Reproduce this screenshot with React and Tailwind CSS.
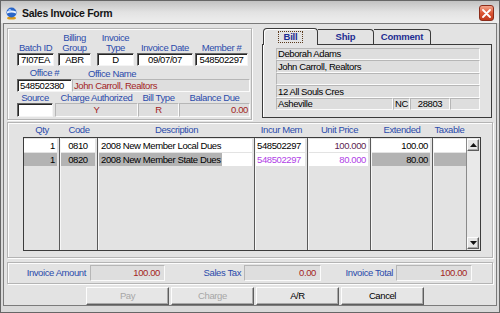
const sunkWhite = 'bg-white border border-t-[#666666] border-l-[#666666] border-r-[#f4f4f4] border-b-[#f4f4f4] shadow-[inset_1px_1px_0_#262626]'
const sunkGray = 'bg-[#dedede] border border-t-[#b6b6b6] border-l-[#b6b6b6] border-r-[#fbfbfb] border-b-[#fbfbfb]'
const etched = 'border border-[#b4b4b4] shadow-[inset_1px_1px_0_#fdfdfd,1px_1px_0_#fdfdfd]'
const raised = 'bg-[#e6e6e6] border border-t-[#fdfdfd] border-l-[#fdfdfd] border-r-[#5e5e5e] border-b-[#5e5e5e] shadow-[inset_-1px_-1px_0_#a8a8a8]'

function HeadField({ label, box, value }) {
  return (
    <div className={`flex flex-col ${box}`}>
      <div className="h-[20px] flex flex-col justify-end items-center leading-[10px] text-[#2b4bab] whitespace-nowrap">
        {label.map(l => <span key={l}>{l}</span>)}
      </div>
      <div className={`h-[13px] flex items-center justify-center ${sunkWhite}`}>{value}</div>
    </div>
  )
}

function Cell({ className = '', children }) {
  return <div className={`h-[13px] mr-[2px] flex items-center px-[2px] whitespace-nowrap ${className}`}>{children}</div>
}

function Globe() {
  return (
    <svg width="11" height="13" viewBox="0 0 11 13">
      <ellipse cx="5.5" cy="11" rx="4.5" ry="1.6" fill="#d89a1c" />
      <circle cx="5.5" cy="5.5" r="5" fill="#2a66c8" />
      <path d="M1 4.5 Q5.5 2.5 10 4.5 L10 6.5 Q5.5 4.5 1 6.5 Z" fill="#e8f0ff" />
      <circle cx="3.8" cy="3.2" r="1.3" fill="#9cc4ff" />
    </svg>
  )
}

function Arrow({ up }) {
  return (
    <svg width="7" height="4" viewBox="0 0 7 4">
      <path d={up ? 'M0 4 L3.5 0 L7 4 Z' : 'M0 0 L3.5 4 L7 0 Z'} fill="#111" />
    </svg>
  )
}

export default function App() {
  return (
    <div className="w-[500px] h-[313px] flex flex-col bg-[#d9d9d9] border border-[#666666] overflow-hidden font-['Liberation_Sans',Arial,sans-serif] text-[9.5px] tracking-[-0.4px] leading-none text-black select-none">
      {/* title bar */}
      <div className="h-[22px] flex items-center pl-[5px] pr-[5px] pt-[2px] bg-linear-to-b from-[#c2c2c2] via-[#e2e2e2] to-[#eeeeee]">
        <Globe />
        <span className="ml-[5px] text-[10.5px] font-bold tracking-[-0.3px] text-[#141414]">Sales Invoice Form</span>
        <div className="ml-auto w-[15px] h-[16px] rounded-[3px] border border-[#8c2c1a] bg-linear-to-b from-[#f3a58c] via-[#dc5634] to-[#c13a1c] flex items-center justify-center">
          <svg width="9" height="9" viewBox="0 0 9 9">
            <path d="M1 1 L8 8 M8 1 L1 8" stroke="#fff" strokeWidth="1.8" strokeLinecap="round" />
          </svg>
        </div>
      </div>

      {/* client */}
      <div className="mx-[2px] h-[283px] flex flex-col border border-[#7b7b7b] bg-[#e3e3e3] px-[3px]">
        {/* header area */}
        <div className="mt-[4px] h-[92px] flex">
          <div className={`w-[245px] flex flex-col pl-[9px] pt-[4px] ${etched}`}>
            <div className="flex items-end">
              <HeadField label={['Batch ID']} box="w-[37px]" value="7I07EA" />
              <HeadField label={['Billing', 'Group']} box="ml-[4px] w-[33px]" value="ABR" />
              <HeadField label={['Invoice', 'Type']} box="ml-[6px] w-[37px]" value="D" />
              <HeadField label={['Invoice Date']} box="ml-[3px] w-[56px]" value="09/07/07" />
              <HeadField label={['Member #']} box="ml-[2px] w-[53px]" value="548502297" />
            </div>
            <div className="mt-[2px] h-[10px] flex text-[#2b4bab] whitespace-nowrap">
              <div className="w-[55px] flex justify-center">Office #</div>
              <div className="pl-[16px] pt-[1px]">Office Name</div>
            </div>
            <div className="mt-[1px] flex">
              <div className={`w-[55px] h-[13px] flex items-center pl-[2px] ${sunkWhite}`}>548502380</div>
              <div className={`w-[178px] h-[13px] flex items-center pl-[1px] text-[#a31f1f] ${sunkGray}`}>John Carroll, Realtors</div>
            </div>
            <div className="mt-[1px] h-[10px] flex text-[#2b4bab] whitespace-nowrap">
              <div className="w-[36px] flex justify-center">Source</div>
              <div className="ml-[2px] w-[83px] flex justify-center">Charge Authorized</div>
              <div className="w-[41px] flex justify-center">Bill Type</div>
              <div className="w-[71px] flex justify-center">Balance Due</div>
            </div>
            <div className="flex h-[14px]">
              <div className={`w-[36px] ${sunkWhite}`} />
              <div className={`ml-[2px] w-[83px] flex items-center justify-center text-[#a31f1f] ${sunkGray}`}>Y</div>
              <div className={`w-[41px] flex items-center justify-center text-[#a31f1f] ${sunkGray}`}>R</div>
              <div className={`w-[71px] flex items-center justify-end pr-[1px] text-[#a31f1f] ${sunkGray}`}>0.00</div>
            </div>
          </div>

          {/* tabs */}
          <div className="ml-[10px] w-[230px] h-[90px] flex flex-col">
            <div className="h-[16px] flex items-end pl-[1px] relative z-10 font-bold text-[#1d2d92] tracking-[-0.2px]">
              <div className="w-[55px] h-[17px] -mb-[1px] border border-b-0 border-[#3a3a3a] rounded-t-[4px] bg-[#e3e3e3] shadow-[inset_1px_1px_0_#fff] flex items-center justify-center">
                <span className="h-[12px] px-[5px] flex items-center border border-dotted border-[#5b3a1c]">Bill</span>
              </div>
              <div className="w-[56px] h-[15px] border border-b-0 border-l-0 border-[#3a3a3a] rounded-tr-[4px] bg-[#e3e3e3] flex items-center justify-center">Ship</div>
              <div className="w-[57px] h-[15px] border border-b-0 border-l-0 border-[#3a3a3a] rounded-tr-[4px] bg-[#e3e3e3] flex items-center justify-center">Comment</div>
            </div>
            <div className="flex-1 border border-[#3a3a3a] shadow-[inset_1px_0_0_#fff] pl-[13px] pr-[11px] pt-[3px]">
              <div className="h-[62px] grid grid-rows-5">
                <div className={`flex items-center pl-[1px] ${sunkGray}`}>Deborah Adams</div>
                <div className={`flex items-center pl-[1px] ${sunkGray}`}>John Carroll, Realtors</div>
                <div className={sunkGray} />
                <div className={`flex items-center pl-[1px] ${sunkGray}`}>12 All Souls Cres</div>
                <div className="flex">
                  <div className={`w-[117px] flex items-center pl-[1px] ${sunkGray}`}>Asheville</div>
                  <div className={`w-[17px] flex items-center justify-center ${sunkGray}`}>NC</div>
                  <div className={`w-[40px] flex items-center justify-center ${sunkGray}`}>28803</div>
                  <div className={`flex-1 ${sunkGray}`} />
                </div>
              </div>
            </div>
          </div>
        </div>

        {/* line items */}
        <div className={`mt-[2px] h-[136px] flex flex-col pl-[15px] pt-[2px] ${etched}`}>
          <div className="h-[12px] flex ml-[1px] text-[#2b4bab] whitespace-nowrap">
            <div className="w-[36px] flex justify-center">Qty</div>
            <div className="w-[38px] flex justify-center">Code</div>
            <div className="w-[157px] flex justify-center">Description</div>
            <div className="w-[53px] flex justify-center">Incur Mem</div>
            <div className="w-[63px] flex justify-center">Unit Price</div>
            <div className="w-[62px] flex justify-center">Extended</div>
            <div className="w-[33px] flex justify-center">Taxable</div>
          </div>
          <div className="w-[458px] h-[114px] flex border border-[#3c3c3c] bg-[#e3e3e3]">
            <div className="w-[36px] flex flex-col gap-[1px] pt-[1px] border-r border-r-[#5a5a5a]">
              <Cell className="bg-white justify-end">1</Cell>
              <Cell className="bg-[#b3b3b3] justify-end">1</Cell>
            </div>
            <div className="w-[38px] flex flex-col gap-[1px] pt-[1px] border-l border-l-[#f7f7f7] border-r border-r-[#5a5a5a]">
              <Cell className="bg-white justify-center">0810</Cell>
              <Cell className="bg-[#b3b3b3] justify-center">0820</Cell>
            </div>
            <div className="w-[157px] flex flex-col gap-[1px] pt-[1px] border-l border-l-[#f7f7f7] border-r border-r-[#5a5a5a]">
              <Cell className="bg-white">2008 New Member Local Dues</Cell>
              <Cell className="bg-white !px-0 items-stretch">
                <span className="bg-[#b3b3b3] pl-[2px] pr-[1px] flex items-center">2008 New Member State Dues</span>
              </Cell>
            </div>
            <div className="w-[53px] flex flex-col gap-[1px] pt-[1px] border-l border-l-[#f7f7f7] border-r border-r-[#5a5a5a]">
              <Cell className="bg-white !px-[1px]">548502297</Cell>
              <Cell className="bg-white !px-[1px] text-[#b03ee6]">548502297</Cell>
            </div>
            <div className="w-[63px] flex flex-col gap-[1px] pt-[1px] border-l border-l-[#f7f7f7] border-r border-r-[#5a5a5a]">
              <Cell className="bg-white justify-end text-[#5c1d52]">100.000</Cell>
              <Cell className="bg-white justify-end text-[#b03ee6]">80.000</Cell>
            </div>
            <div className="w-[62px] flex flex-col gap-[1px] pt-[1px] border-l border-l-[#f7f7f7] border-r border-r-[#5a5a5a]">
              <Cell className="bg-white justify-end">100.00</Cell>
              <Cell className="bg-[#b3b3b3] justify-end">80.00</Cell>
            </div>
            <div className="w-[33px] flex flex-col gap-[1px] pt-[1px] border-l border-l-[#f7f7f7]">
              <Cell className="bg-white !mr-0" />
              <Cell className="bg-[#b3b3b3] !mr-0" />
            </div>
            <div className="w-[14px] flex flex-col py-[1px] pr-[1px] border-l border-l-[#8a8a8a] bg-[#e9e9e9]">
              <div className={`h-[12px] flex items-center justify-center ${raised}`}><Arrow up /></div>
              <div className="flex-1" />
              <div className={`h-[12px] flex items-center justify-center ${raised}`}><Arrow /></div>
            </div>
          </div>
        </div>

        {/* totals */}
        <div className={`mt-[4px] h-[22px] flex items-center ${etched}`}>
          <div className="w-[80px] pr-[2px] text-right text-[#2b4bab]">Invoice Amount</div>
          <div className={`ml-[2px] w-[75px] h-[16px] flex items-center justify-end pr-[4px] text-[#a31f1f] ${sunkGray}`}>100.00</div>
          <div className="w-[77px] pr-[1px] text-right text-[#2b4bab]">Sales Tax</div>
          <div className={`ml-[2px] w-[77px] h-[16px] flex items-center justify-end pr-[4px] text-[#a31f1f] ${sunkGray}`}>0.00</div>
          <div className="w-[73px] pr-[1px] text-right text-[#2b4bab]">Invoice Total</div>
          <div className={`ml-[2px] w-[76px] h-[16px] flex items-center justify-end pr-[4px] text-[#a31f1f] ${sunkGray}`}>100.00</div>
        </div>

        {/* buttons */}
        <div className="mt-[3px] h-[18px] flex gap-[2px] pl-[79px]">
          <button className={`w-[83px] h-[18px] text-[#a6a6a6] ${raised}`}>Pay</button>
          <button className={`w-[83px] h-[18px] text-[#a6a6a6] ${raised}`}>Charge</button>
          <button className={`w-[83px] h-[18px] ${raised}`}>A/R</button>
          <button className={`w-[83px] h-[18px] ${raised}`}>Cancel</button>
        </div>
      </div>
    </div>
  )
}
